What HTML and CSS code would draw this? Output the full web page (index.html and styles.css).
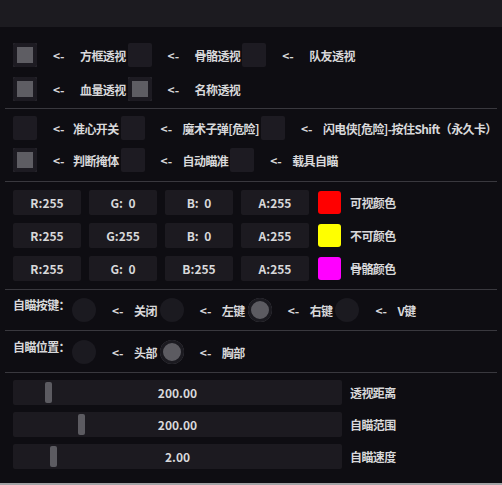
FILE: index.html
```html
<!DOCTYPE html>
<html lang="zh">
<head>
    <meta charset="UTF-8">
    <title>Menu</title>
    <link rel="stylesheet" href="styles.css">
</head>
<body>

<div class="window">
    <div class="titlebar"></div>

    <div class="content">
        <!-- ESP toggles -->
        <div class="group esp">
            <div class="row">
                <span class="cb on"></span><span class="arrow">&lt;-</span><span class="label">方框透视</span>
                <span class="cb"></span><span class="arrow">&lt;-</span><span class="label">骨骼透视</span>
                <span class="cb"></span><span class="arrow">&lt;-</span><span class="label">队友透视</span>
            </div>
            <div class="row">
                <span class="cb on"></span><span class="arrow">&lt;-</span><span class="label">血量透视</span>
                <span class="cb on"></span><span class="arrow">&lt;-</span><span class="label">名称透视</span>
            </div>
        </div>

        <div class="sep s1"></div>

        <!-- Aim toggles -->
        <div class="group aim">
            <div class="row">
                <span class="cb"></span><span class="arrow tight">&lt;-</span><span class="label">准心开关</span>
                <span class="cb"></span><span class="arrow mid">&lt;-</span><span class="label">魔术子弹[危险]</span>
                <span class="cb"></span><span class="arrow mid">&lt;-</span><span class="label">闪电侠[危险]-按住Shift（永久卡）</span>
            </div>
            <div class="row">
                <span class="cb on"></span><span class="arrow tight">&lt;-</span><span class="label">判断掩体</span>
                <span class="cb"></span><span class="arrow mid">&lt;-</span><span class="label">自动瞄准</span>
                <span class="cb"></span><span class="arrow mid">&lt;-</span><span class="label">载具自瞄</span>
            </div>
        </div>

        <div class="sep s2"></div>

        <!-- Colours -->
        <div class="group colors">
            <div class="color-row">
                <span class="field">R:255</span><span class="field">G:&nbsp;&nbsp;0</span><span class="field">B:&nbsp;&nbsp;0</span><span class="field">A:255</span>
                <span class="swatch red"></span><span class="label">可视颜色</span>
            </div>
            <div class="color-row">
                <span class="field">R:255</span><span class="field">G:255</span><span class="field">B:&nbsp;&nbsp;0</span><span class="field">A:255</span>
                <span class="swatch yellow"></span><span class="label">不可颜色</span>
            </div>
            <div class="color-row">
                <span class="field">R:255</span><span class="field">G:&nbsp;&nbsp;0</span><span class="field">B:255</span><span class="field">A:255</span>
                <span class="swatch magenta"></span><span class="label">骨骼颜色</span>
            </div>
        </div>

        <div class="sep s3"></div>

        <!-- Aim key -->
        <div class="radio-row key">
            <span class="caption">自瞄按键：</span>
            <span class="radio"></span><span class="arrow mid">&lt;-</span><span class="label">关闭</span>
            <span class="radio"></span><span class="arrow mid">&lt;-</span><span class="label">左键</span>
            <span class="radio on"></span><span class="arrow mid">&lt;-</span><span class="label">右键</span>
            <span class="radio"></span><span class="arrow mid">&lt;-</span><span class="label">V键</span>
        </div>

        <div class="sep s4"></div>

        <!-- Aim bone -->
        <div class="radio-row bone">
            <span class="caption">自瞄位置：</span>
            <span class="radio"></span><span class="arrow mid">&lt;-</span><span class="label">头部</span>
            <span class="radio on"></span><span class="arrow mid">&lt;-</span><span class="label">胸部</span>
        </div>

        <div class="sep s5"></div>

        <!-- Sliders -->
        <div class="group sliders">
            <div class="slider-row">
                <div class="slider"><span class="grab" style="left: 32px"></span>200.00</div>
                <span class="label">透视距离</span>
            </div>
            <div class="slider-row">
                <div class="slider"><span class="grab" style="left: 65px"></span>200.00</div>
                <span class="label">自瞄范围</span>
            </div>
            <div class="slider-row">
                <div class="slider"><span class="grab" style="left: 37px"></span>2.00</div>
                <span class="label">自瞄速度</span>
            </div>
        </div>
    </div>
</div>

</body>
</html>
```

FILE: styles.css
```css
* {
    margin: 0;
    padding: 0;
    box-sizing: border-box;
}

body {
    background: #a3a3a6;
    width: 502px;
    height: 485px;
    overflow: hidden;
    font-family: "Noto Sans CJK SC", "Noto Sans", sans-serif;
    font-size: 12px;
    font-weight: bold;
    color: #d8d8da;
}

.window {
    width: 502px;
    height: 483px;
    background: #0e0d12;
}

.titlebar {
    height: 27px;
    background: #1c1b20;
}

.content {
    padding: 16px 0 0 13px;
    display: flex;
    flex-direction: column;
}

.group {
    display: flex;
    flex-direction: column;
}

.esp { gap: 10px; }
.aim { gap: 8px; margin-top: 7px; }
.colors { gap: 8px; margin-top: 8px; }
.sliders { gap: 7px; margin-top: 7px; }

.row {
    display: flex;
    align-items: center;
    height: 24px;
    white-space: nowrap;
}

/* Separators */
.sep {
    height: 1px;
    background: #39383e;
    margin-left: -8px;
    width: 492px;
}

.s1 { margin-top: 7px; }
.s2 { margin-top: 9px; }
.s3 { margin-top: 8px; }
.s4 { margin-top: 8px; }
.s5 { margin-top: 8px; }

/* Checkbox */
.cb {
    flex: none;
    width: 24px;
    height: 24px;
    background: #1d1b22;
    border-radius: 2px;
    margin: 0 16px 0 2px;
}

.row .cb:first-child {
    margin-left: 0;
}

.cb.on {
    background: #5e5d63;
    box-shadow: inset 0 0 0 4px #1d1b22;
}

.arrow {
    flex: none;
    width: 27px;
}

.arrow.tight { width: 20px; }
.arrow.mid { width: 22px; }

.label,
.caption {
    white-space: nowrap;
    letter-spacing: -0.6px;
}

/* Colour fields */
.color-row {
    display: flex;
    align-items: center;
    gap: 8px;
    height: 25px;
}

.field {
    width: 68px;
    height: 25px;
    background: #1c1a20;
    border-radius: 2px;
    display: flex;
    align-items: center;
    justify-content: center;
    white-space: pre;
}

.swatch {
    width: 23px;
    height: 23px;
    border-radius: 3px;
    margin: 0 1px;
}

.red { background: #ff0000; }
.yellow { background: #ffff00; }
.magenta { background: #ff00ff; }

/* Radio buttons */
.radio-row {
    display: flex;
    align-items: center;
    height: 24px;
    white-space: nowrap;
}

.key { margin-top: 8px; }
.bone { margin-top: 9px; }

.caption {
    width: 59px;
    align-self: flex-start;
    margin-top: -2px;
}

.radio {
    flex: none;
    width: 24px;
    height: 24px;
    border-radius: 50%;
    background: #1b1a20;
    margin: 0 16px 0 3px;
}

.caption + .radio {
    margin-left: 0;
}

.radio.on {
    background: #5c5b61;
    box-shadow: inset 0 0 0 3px #1b1a20;
}

/* Sliders */
.slider-row {
    display: flex;
    align-items: center;
    gap: 8px;
    height: 25px;
}

.slider {
    position: relative;
    width: 329px;
    height: 25px;
    background: #1c1a20;
    border-radius: 2px;
    display: flex;
    align-items: center;
    justify-content: center;
}

.grab {
    position: absolute;
    top: 2px;
    width: 7px;
    height: 21px;
    background: #5c5b61;
    border-radius: 2px;
}
```
